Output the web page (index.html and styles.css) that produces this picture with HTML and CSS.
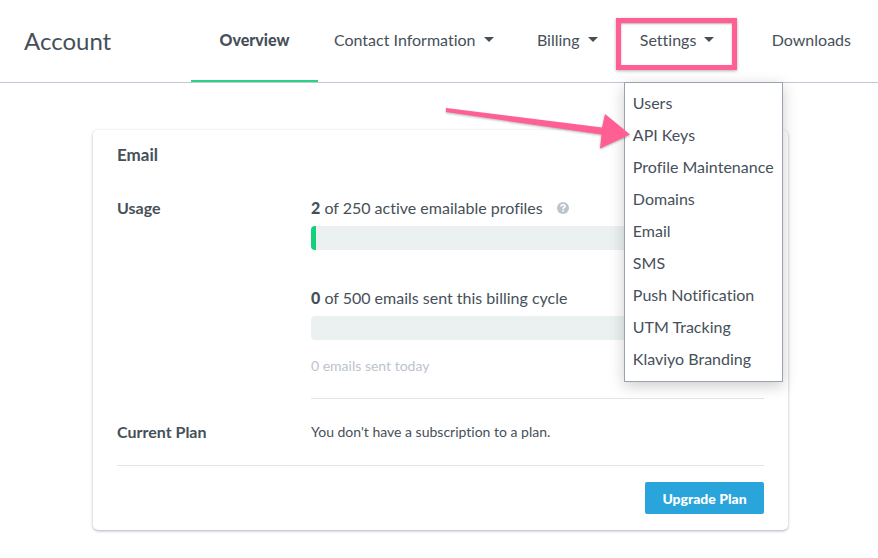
FILE: index.html
```html
<!DOCTYPE html>
<html lang="en">
<head>
    <meta charset="UTF-8">
    <meta name="viewport" content="width=device-width, initial-scale=1.0">
    <title>Account</title>
    <link rel="stylesheet" href="styles.css">
</head>
<body>
    <header class="header">
        <h1 class="title">Account</h1>
        <nav class="tabs">
            <a href="#overview" class="tab active">Overview</a>
            <button type="button" class="tab">Contact Information <span class="caret"></span></button>
            <button type="button" class="tab">Billing <span class="caret"></span></button>
            <div class="dropdown">
                <button type="button" class="tab" aria-expanded="true">Settings <span class="caret"></span></button>
                <ul class="menu">
                    <li><a href="#users">Users</a></li>
                    <li><a href="#api-keys">API Keys</a></li>
                    <li><a href="#profile-maintenance">Profile Maintenance</a></li>
                    <li><a href="#domains">Domains</a></li>
                    <li><a href="#email">Email</a></li>
                    <li><a href="#sms">SMS</a></li>
                    <li><a href="#push">Push Notification</a></li>
                    <li><a href="#utm">UTM Tracking</a></li>
                    <li><a href="#branding">Klaviyo Branding</a></li>
                </ul>
                <div class="highlight"></div>
                <svg class="arrow" width="190" height="60" viewBox="0 0 190 60" aria-hidden="true">
                    <path d="M6 13 L162 32.500 L165 19 L190 39.500 L160 53.500 L161.500 39.500 L6 17 Z" fill="#ff5f92"/>
                </svg>
            </div>
            <a href="#downloads" class="tab">Downloads</a>
        </nav>
    </header>

    <main class="card">
        <h2 class="card-title">Email</h2>

        <section class="row">
            <h3 class="label">Usage</h3>
            <div class="usage">
                <p class="stat">
                    <span><strong>2</strong> of 250 active emailable profiles</span>
                    <svg class="help" width="12" height="12" viewBox="0 0 12 12" aria-hidden="true">
                        <circle cx="6" cy="6" r="6" fill="#bcc3cd"/>
                        <path d="M4 4.600 C4 2.200 8 2.200 8 4.400 C8 5.700 6.100 5.500 6.100 7" fill="none" stroke="#fff" stroke-width="1.700"/>
                        <rect x="5.200" y="7.900" width="1.800" height="1.700" fill="#fff"/>
                    </svg>
                </p>
                <div class="bar"><div class="bar-fill" style="width: 1%"></div></div>
                <p class="stat">
                    <span><strong>0</strong> of 500 emails sent this billing cycle</span>
                </p>
                <div class="bar"></div>
                <p class="note">0 emails sent today</p>
            </div>
        </section>

        <section class="row plan">
            <h3 class="label">Current Plan</h3>
            <p class="plan-text">You don't have a subscription to a plan.</p>
        </section>

        <div class="actions">
            <button type="button" class="btn">Upgrade Plan</button>
        </div>
    </main>
</body>
</html>
```
FILE: styles.css
```css
* {
    box-sizing: border-box;
}
body {
    margin: 0;
    background-color: #fff;
    color: #465059;
    font-family: Lato, "Open Sans", sans-serif;
    font-size: 16px;
    line-height: 24px;
    font-variant-ligatures: none;
}
h1, h2, h3, p, ul {
    margin: 0;
    padding: 0;
}
a {
    color: inherit;
    text-decoration: none;
}

/* header */
.header {
    display: flex;
    height: 83px;
    padding-right: 11px;
    border-bottom: 1px solid #c1cad4;
}
.title {
    width: 191px;
    padding-left: 24px;
    font-size: 24px;
    font-weight: 400;
    line-height: 82px;
}
.tabs {
    flex: 1;
    display: grid;
    grid-template-columns: 127fr 203fr 103fr 132fr 111fr;
}
.tab {
    display: flex;
    align-items: center;
    gap: 8px;
    height: 82px;
    padding: 0 16px 3px;
    border: 0;
    background: none;
    color: inherit;
    font: inherit;
    font-variant-ligatures: none;
    white-space: nowrap;
    cursor: pointer;
}
.tab.active {
    justify-content: center;
    padding-bottom: 1px;
    border-bottom: 2px solid #2bd283;
    font-weight: 900;
}
.caret {
    border: 5px solid transparent;
    border-top-color: #465059;
    border-bottom: 0;
}

/* settings menu */
.dropdown {
    position: relative;
    justify-self: start;
}
.menu {
    position: absolute;
    top: 82px;
    left: 0;
    padding: 4px 8px 6px;
    border: 1px solid #9aa2af;
    background-color: #fff;
    box-shadow: 0 4px 14px rgba(0, 0, 0, 0.2);
    list-style: none;
    white-space: nowrap;
}
.menu a {
    display: block;
    line-height: 32px;
}
.highlight {
    position: absolute;
    top: 18px;
    left: -8px;
    right: -7px;
    height: 52px;
    border: 5px solid #ff5f92;
    box-shadow: 0 1px 3px rgba(0, 0, 0, 0.3), inset 0 1px 2px rgba(0, 0, 0, 0.3);
    pointer-events: none;
}
.arrow {
    position: absolute;
    top: 95px;
    left: -184px;
    filter: drop-shadow(0 1px 1px rgba(0, 0, 0, 0.3));
    pointer-events: none;
}

/* email card */
.card {
    margin: 47px 90px 28px 93px;
    padding: 13px 24px 16px;
    border-radius: 5px;
    box-shadow: 0 1px 3px rgba(50, 60, 90, 0.4);
}
.card-title {
    font-size: 17px;
    font-weight: 700;
}
.row {
    display: grid;
    grid-template-columns: 194px 1fr;
}
.label {
    font-size: 16px;
    font-weight: 700;
}
.usage {
    padding: 29px 0 20px;
    border-bottom: 1px solid #e3e5e9;
}
.row:not(.plan) .label {
    padding-top: 29px;
}
.stat {
    display: flex;
    align-items: center;
    gap: 14px;
}
.stat strong {
    font-weight: 900;
}
.bar {
    height: 24px;
    margin: 6px 0 36px;
    border-radius: 4px;
    background-color: #ebf1f1;
    overflow: hidden;
}
.bar-fill {
    height: 100%;
    background-color: #12d07c;
}
.note {
    margin-top: -22px;
    color: #bcc3cd;
    font-size: 14px;
}
.plan {
    padding: 21px 0;
    border-bottom: 1px solid #e3e5e9;
}
.plan-text {
    font-size: 14px;
}
.actions {
    display: flex;
    justify-content: flex-end;
    padding-top: 16px;
}
.btn {
    height: 32px;
    min-width: 119px;
    padding: 0 16px;
    border: 0;
    border-radius: 2px;
    background-color: #29a5dc;
    color: #fff;
    font-family: inherit;
    font-size: 14px;
    font-weight: 900;
    cursor: pointer;
}
```
